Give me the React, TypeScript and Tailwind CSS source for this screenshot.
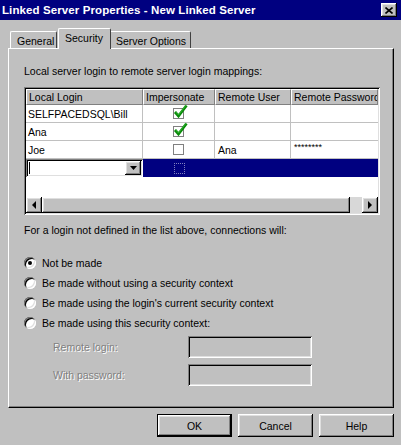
import React from "react";

const raised =
  "shadow-[inset_-1px_-1px_#000,inset_1px_1px_#fff,inset_-2px_-2px_#808080,inset_2px_2px_#dfdfdf]";
const sunken =
  "shadow-[inset_1px_1px_#808080,inset_-1px_-1px_#fff,inset_2px_2px_#000,inset_-2px_-2px_#dfdfdf]";
const disabledText = "text-[#808080] [text-shadow:1px_1px_0_#fff]";

function CheckMark() {
  return (
    <svg width="15" height="14" viewBox="0 0 15 14" className="absolute left-[-1px] top-[-5px]">
      <path d="M2 8 L5.5 12 L13.5 1.5" fill="none" stroke="#0a8a0a" strokeWidth="2.8" strokeLinejoin="miter" />
      <path d="M2.5 7.5 L5.5 11 L13 1" fill="none" stroke="#3cc03c" strokeWidth="0.8" />
    </svg>
  );
}

function GridCheck({ checked, focus }: { checked?: boolean; focus?: boolean }) {
  if (focus) {
    return <div className="w-[11px] h-[11px] border border-dotted border-[#8080c0]" />;
  }
  return (
    <div className="relative w-[11px] h-[11px] border border-[#808080] bg-white">
      {checked && <CheckMark />}
    </div>
  );
}

function Arrow({ dir }: { dir: "left" | "right" | "down" }) {
  const pts = dir === "left" ? "4,0 0,4 4,8" : dir === "right" ? "0,0 4,4 0,8" : "0,0 7,0 3.5,4";
  const w = dir === "down" ? 7 : 4;
  const h = dir === "down" ? 4 : 8;
  return (
    <svg width={w} height={h} viewBox={`0 0 ${w} ${h}`}>
      <polygon points={pts} fill="#000" />
    </svg>
  );
}

function Radio({ checked, label }: { checked?: boolean; label: string }) {
  return (
    <div className="h-[20px] flex items-center">
      <div className={`w-[12px] h-[12px] rounded-full bg-white flex items-center justify-center ${sunken}`}>
        {checked && <div className="w-[4px] h-[4px] rounded-full bg-black" />}
      </div>
      <span className="ml-[6px]">{label}</span>
    </div>
  );
}

const cols = [117, 72, 76, 87];

export default function App() {
  const rows = [
    { login: "SELFPACEDSQL\\Bill", imp: true, user: "", pass: "" },
    { login: "Ana", imp: true, user: "", pass: "" },
    { login: "Joe", imp: false, user: "Ana", pass: "********" },
  ];

  return (
    <div className="w-[401px] h-[445px] bg-[#c0c0c0] overflow-hidden text-[10.5px] leading-[12px] text-black font-['Liberation_Sans',Arial,sans-serif]">
      {/* Title bar */}
      <div className="h-[20px] bg-[#000080] flex items-center pl-[2px] pr-[4px]">
        <span className="flex-1 text-white font-bold text-[11.5px] tracking-[0.1px]">
          Linked Server Properties - New Linked Server
        </span>
        <div className={`w-[16px] h-[14px] bg-[#c0c0c0] flex items-center justify-center ${raised}`}>
          <svg width="8" height="7" viewBox="0 0 8 7">
            <path d="M0.5 0.5 L7.5 6.5 M7.5 0.5 L0.5 6.5" stroke="#000" strokeWidth="1.6" />
          </svg>
        </div>
      </div>

      {/* Tabs */}
      <div className="h-[28px] pt-[8px] pl-[10px] flex items-end">
        <div className="w-[47px] h-[17px] border-l border-t border-white border-r border-r-[#404040] rounded-tl-[2px] rounded-tr-[2px] pl-[6px] pt-[3px]">
          General
        </div>
        <div className="relative z-10 w-[53px] h-[21px] mb-[-1px] ml-[1px] bg-[#c0c0c0] border-l border-t border-white border-r border-r-[#404040] rounded-tl-[2px] rounded-tr-[2px] pl-[6px] pt-[3px]">
          Security
        </div>
        <div className="w-[80px] h-[17px] border-t border-white border-r border-r-[#404040] rounded-tr-[2px] pl-[5px] pt-[3px]">
          Server Options
        </div>
      </div>

      {/* Panel */}
      <div className="ml-[8px] w-[386px] h-[360px] border-l border-t border-white border-r border-b border-r-black border-b-black shadow-[inset_-1px_-1px_#808080] pl-[15px] pt-[16px]">
        <div className="h-[12px]">Local server login to remote server login mappings:</div>

        {/* Grid */}
        <div className={`mt-[10px] w-[356px] h-[128px] bg-white p-[2px] ${sunken}`}>
          <div className="h-[124px] flex flex-col">
            <div className="flex h-[16px] bg-[#c0c0c0]">
              {["Local Login", "Impersonate", "Remote User", "Remote Password"].map((h, i) => (
                <div
                  key={h}
                  style={{ width: cols[i] }}
                  className="h-[16px] border-t border-l border-white border-r border-b border-r-[#808080] border-b-[#808080] pl-[2px] pt-[1px] overflow-hidden whitespace-nowrap"
                >
                  {h}
                </div>
              ))}
            </div>

            {rows.map((r) => (
              <div key={r.login} className="flex h-[18px]">
                <div style={{ width: cols[0] }} className="border-r border-b border-[#c0c0c0] pl-[2px] pt-[3px]">
                  {r.login}
                </div>
                <div style={{ width: cols[1] }} className="border-r border-b border-[#c0c0c0] flex items-center justify-center">
                  <GridCheck checked={r.imp} />
                </div>
                <div style={{ width: cols[2] }} className="border-r border-b border-[#c0c0c0] pl-[3px] pt-[3px]">
                  {r.user}
                </div>
                <div style={{ width: cols[3] }} className="border-b border-[#c0c0c0] pl-[3px] pt-[1px] text-[9px] leading-[10px]">
                  {r.pass}
                </div>
              </div>
            ))}

            {/* Editing row */}
            <div className="flex h-[18px]">
              <div style={{ width: cols[0] }} className="flex">
                <div className={`flex-1 h-[18px] bg-white flex items-center pl-[2px] pr-[2px] ${sunken}`}>
                  <div className="w-[1px] h-[12px] bg-black ml-[1px]" />
                  <div className="flex-1" />
                  <div className={`w-[16px] h-[14px] bg-[#c0c0c0] flex items-center justify-center ${raised}`}>
                    <Arrow dir="down" />
                  </div>
                </div>
              </div>
              <div className="flex-1 bg-[#000080] flex">
                <div style={{ width: cols[1] }} className="flex items-center justify-center">
                  <GridCheck focus />
                </div>
              </div>
            </div>

            <div className="flex-1" />

            {/* Horizontal scrollbar */}
            <div className="flex h-[16px]">
              <div className={`w-[16px] h-[16px] bg-[#c0c0c0] flex items-center justify-center ${raised}`}>
                <Arrow dir="left" />
              </div>
              <div className={`w-[308px] h-[16px] bg-[#c0c0c0] ${raised}`} />
              <div className="w-[12px] h-[16px] bg-[#d8d8d8]" />
              <div className={`w-[16px] h-[16px] bg-[#c0c0c0] flex items-center justify-center ${raised}`}>
                <Arrow dir="right" />
              </div>
            </div>
          </div>
        </div>

        <div className="mt-[9px] h-[12px]">For a login not defined in the list above, connections will:</div>

        <div className="mt-[17px] flex flex-col">
          <Radio checked label="Not be made" />
          <Radio label="Be made without using a security context" />
          <Radio label="Be made using the login's current security context" />
          <Radio label="Be made using this security context:" />
        </div>

        <div className="mt-[3px] flex items-center h-[22px]">
          <span className={`ml-[29px] w-[135px] ${disabledText}`}>Remote login:</span>
          <div className={`w-[124px] h-[22px] bg-[#c0c0c0] ${sunken}`} />
        </div>
        <div className="mt-[6px] flex items-center h-[22px]">
          <span className={`ml-[29px] w-[135px] ${disabledText}`}>With password:</span>
          <div className={`w-[124px] h-[22px] bg-[#c0c0c0] ${sunken}`} />
        </div>
      </div>

      {/* Buttons */}
      <div className="mt-[6px] flex justify-end gap-[6px] pr-[7px]">
        <div className="w-[75px] h-[23px] border border-black">
          <div className={`w-full h-full flex items-center justify-center ${raised}`}>OK</div>
        </div>
        <div className={`w-[75px] h-[23px] flex items-center justify-center ${raised}`}>Cancel</div>
        <div className={`w-[75px] h-[23px] flex items-center justify-center ${raised}`}>Help</div>
      </div>
    </div>
  );
}
